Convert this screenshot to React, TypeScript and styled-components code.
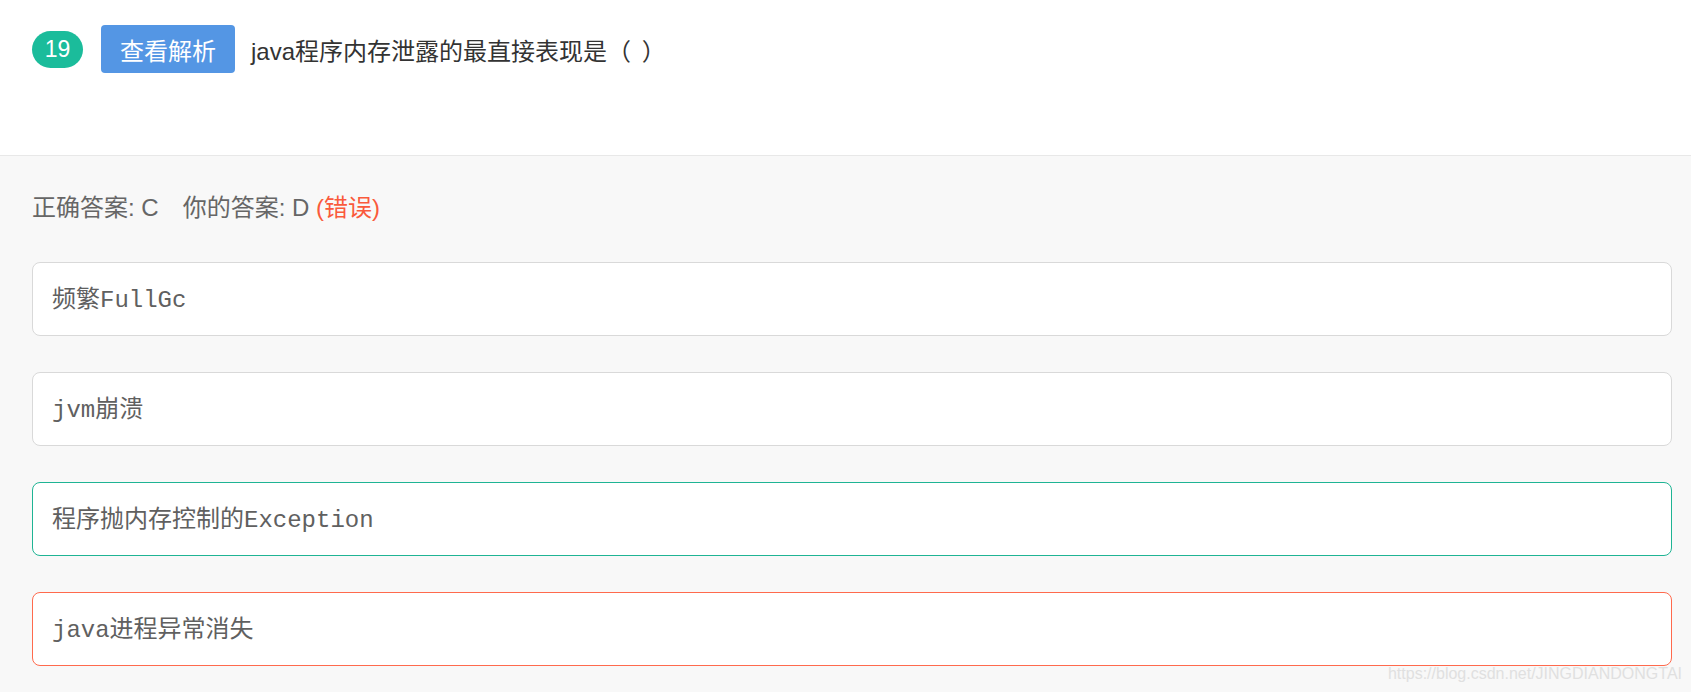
import React from "react";
import styled, { createGlobalStyle } from "styled-components";

type OptionState = "normal" | "correct" | "wrong";

interface Option {
  text: string;
  state: OptionState;
}

const options: Option[] = [
  { text: "频繁FullGc", state: "normal" },
  { text: "jvm崩溃", state: "normal" },
  { text: "程序抛内存控制的Exception", state: "correct" },
  { text: "java进程异常消失", state: "wrong" },
];

const borderColors: Record<OptionState, string> = {
  normal: "#d9d9d9",
  correct: "#1fb494",
  wrong: "#ff6a4d",
};

function App() {
  return (
    <>
      <GlobalStyle />
      <Page>
        <Header>
          <TitleRow>
            <NumberBadge>19</NumberBadge>
            <AnalysisButton>查看解析</AnalysisButton>
            <Question>java程序内存泄露的最直接表现是（ ）</Question>
          </TitleRow>
        </Header>
        <Body>
          <AnswerLine>
            <AnswerPart>正确答案: C</AnswerPart>
            你的答案: D <WrongMark>(错误)</WrongMark>
          </AnswerLine>
          <OptionList>
            {options.map((o) => (
              <OptionBox key={o.text} state={o.state}>
                {o.text}
              </OptionBox>
            ))}
          </OptionList>
        </Body>
        <Watermark>https://blog.csdn.net/JINGDIANDONGTAI</Watermark>
      </Page>
    </>
  );
}

export default App;

const GlobalStyle = createGlobalStyle`
  html, body {
    margin: 0;
    padding: 0;
    background: #f8f8f8;
  }
  body {
    font-family: "Liberation Sans", "Noto Sans CJK SC", Arial, sans-serif;
  }
`;

const Page = styled.div`
  position: relative;
  min-height: 100vh;
  background: #f8f8f8;
`;

// 上方题目部分
const Header = styled.div`
  height: 156px;
  box-sizing: border-box;
  padding: 25px 32px 0 32px;
  background: #ffffff;
  border-bottom: 1px solid #e8e8e8;
`;

const TitleRow = styled.div`
  display: flex;
  align-items: center;
`;

const NumberBadge = styled.div`
  display: flex;
  justify-content: center;
  align-items: center;
  width: 51px;
  height: 37px;
  border-radius: 19px;
  background: #1bbc9b;
  color: #ffffff;
  font-size: 23px;
`;

const AnalysisButton = styled.button`
  margin-left: 18px;
  height: 48px;
  padding: 0 19px;
  border: 0;
  outline: none;
  border-radius: 4px;
  background: #5496e4;
  color: #ffffff;
  font-family: "Liberation Sans", "Noto Sans CJK SC", sans-serif;
  font-size: 24px;
  cursor: pointer;
`;

const Question = styled.div`
  margin-left: 16px;
  color: #333333;
  font-size: 24px;
  word-spacing: 4px;
`;

// 答案部分
const Body = styled.div`
  padding: 34px 19px 0 32px;
`;

const AnswerLine = styled.div`
  color: #666666;
  font-size: 24px;
  line-height: 36px;
`;

const AnswerPart = styled.span`
  margin-right: 24px;
`;

const WrongMark = styled.span`
  color: #fa5a3c;
`;

const OptionList = styled.div`
  display: flex;
  flex-direction: column;
  gap: 36px;
  margin-top: 36px;
`;

const OptionBox = styled.div<{ state: OptionState }>`
  display: flex;
  align-items: center;
  height: 74px;
  box-sizing: border-box;
  padding: 0 19px 5px 19px;
  background: #ffffff;
  border: 1px solid ${(p) => borderColors[p.state]};
  border-radius: 8px;
  color: #606060;
  font-family: "Liberation Mono", "Noto Sans CJK SC", monospace;
  font-size: 24px;
`;

const Watermark = styled.div`
  position: absolute;
  right: 9px;
  bottom: 9px;
  color: #e0e0e0;
  font-size: 16px;
`;
